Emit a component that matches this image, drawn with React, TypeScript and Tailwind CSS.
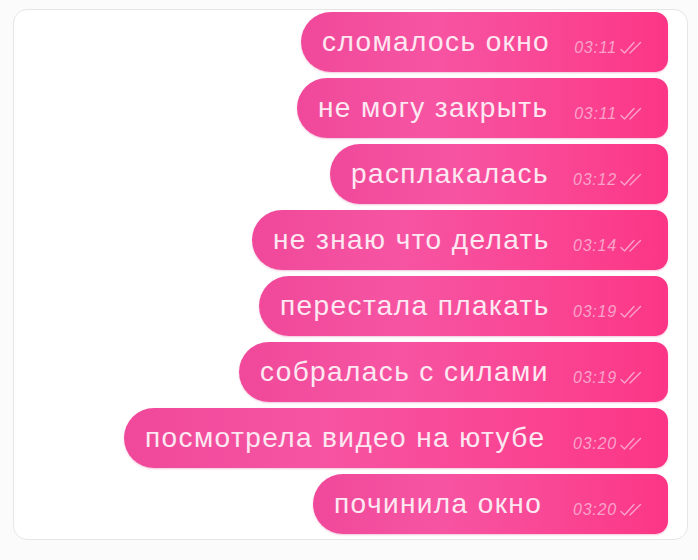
type Message = {
  text: string;
  time: string;
  width: string;
};

const messages: Message[] = [
  { text: "сломалось окно", time: "03:11", width: "w-[367px]" },
  { text: "не могу закрыть", time: "03:11", width: "w-[371px]" },
  { text: "расплакалась", time: "03:12", width: "w-[338px]" },
  { text: "не знаю что делать", time: "03:14", width: "w-[416px]" },
  { text: "перестала плакать", time: "03:19", width: "w-[409px]" },
  { text: "собралась с силами", time: "03:19", width: "w-[429px]" },
  { text: "посмотрела видео на ютубе", time: "03:20", width: "w-[544px]" },
  { text: "починила окно", time: "03:20", width: "w-[355px]" },
];

function DoubleCheck() {
  return (
    <svg width="26" height="14" viewBox="0 0 26 14" fill="none" className="ml-[2px]">
      <path
        d="M2 8.5 L5.5 12 L15 1.5"
        stroke="currentColor"
        strokeWidth="1.4"
        strokeLinecap="round"
        strokeLinejoin="round"
      />
      <path
        d="M11 12 L21.5 1.5"
        stroke="currentColor"
        strokeWidth="1.4"
        strokeLinecap="round"
      />
    </svg>
  );
}

export default function App() {
  return (
    <div className="h-[560px] w-[698px] bg-[#fbfbfb] pl-[13px] pt-[9px] font-['Liberation_Sans',Arial,sans-serif]">
      <div className="flex h-[531px] w-[675px] flex-col items-end gap-[6px] rounded-[14px] border border-[#e6e6e6] bg-white pr-[19px] pt-[2px]">
        {messages.map((message, index) => (
          <div
            key={index}
            className={`${message.width} flex h-[60px] shrink-0 items-center rounded-l-[30px] rounded-r-[13px] bg-gradient-to-r from-[#f0489a] via-[#f654a3] via-35% to-[#fc3586] pl-[21px] pr-[23px] shadow-[0_1px_2px_rgba(200,40,110,0.25)]`}
          >
            <span className="whitespace-nowrap text-[28px] leading-none tracking-[1.4px] text-[#fde8f2]">
              {message.text}
            </span>
            <span className="ml-auto mt-[11px] flex items-center text-[16px] italic leading-none tracking-[0.8px] text-[#f9a3cb]">
              {message.time}
              <DoubleCheck />
            </span>
          </div>
        ))}
      </div>
    </div>
  );
}
